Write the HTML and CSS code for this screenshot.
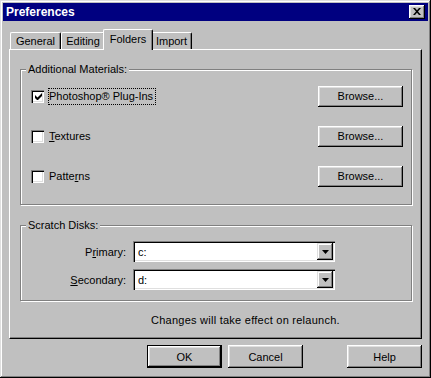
FILE: index.html
```html
<!DOCTYPE html>
<html lang="en">
<head>
    <meta charset="UTF-8">
    <title>Preferences</title>
    <link rel="stylesheet" href="styles.css">
</head>
<body>
    <div class="window">
        <div class="titlebar">
            <span class="title">Preferences</span>
            <span class="close">
                <svg width="8" height="7" viewBox="0 0 8 7"><path d="M0 0h2l2 2.2L6 0h2L5 3.5 8 7H6L4 4.8 2 7H0l3-3.5z" fill="#000"/></svg>
            </span>
        </div>

        <div class="content">
            <div class="tabs">
                <span class="tab tab-general">General</span>
                <span class="tab tab-editing">Editing</span>
                <span class="tab tab-folders active">Folders</span>
                <span class="tab tab-import">Import</span>
            </div>

            <div class="panel">
                <fieldset class="group materials">
                    <legend>Additional Materials:</legend>
                    <div class="row">
                        <span class="check">
                            <svg width="7" height="7" viewBox="0 0 7 7"><path d="M0 2v3l2 2h1l4-4V0L2.5 4.5z" fill="#000"/></svg>
                        </span>
                        <span class="check-label focused">Photoshop® Plug-Ins</span>
                        <span class="btn browse">Browse...</span>
                    </div>
                    <div class="row">
                        <span class="check"></span>
                        <span class="check-label"><u>T</u>extures</span>
                        <span class="btn browse">Browse...</span>
                    </div>
                    <div class="row">
                        <span class="check"></span>
                        <span class="check-label">Patte<u>r</u>ns</span>
                        <span class="btn browse">Browse...</span>
                    </div>
                </fieldset>

                <fieldset class="group scratch">
                    <legend>Scratch Disks:</legend>
                    <div class="disk-grid">
                        <span class="disk-label">P<u>r</u>imary:</span>
                        <div class="combo">
                            <span class="combo-value">c:</span>
                            <span class="combo-btn"><svg width="7" height="4" viewBox="0 0 7 4"><path d="M0 0h7L3.5 4z" fill="#000"/></svg></span>
                        </div>
                        <span class="disk-label"><u>S</u>econdary:</span>
                        <div class="combo">
                            <span class="combo-value">d:</span>
                            <span class="combo-btn"><svg width="7" height="4" viewBox="0 0 7 4"><path d="M0 0h7L3.5 4z" fill="#000"/></svg></span>
                        </div>
                    </div>
                </fieldset>

                <p class="note">Changes will take effect on relaunch.</p>
            </div>

            <div class="actions">
                <span class="btn default">OK</span>
                <span class="btn cancel">Cancel</span>
                <span class="btn help">Help</span>
            </div>
        </div>
    </div>
</body>
</html>
```

FILE: styles.css
```css
body {
    margin: 0;
    background-color: #c0c0c0;
    font-family: "Liberation Sans", Arial, sans-serif;
    font-size: 11px;
    color: #000;
}
.window {
    width: 431px;
    height: 378px;
    box-sizing: border-box;
    padding: 3px;
    background-color: #c0c0c0;
    box-shadow: inset -1px -1px #000, inset 1px 1px #dfdfdf, inset -2px -2px #808080, inset 2px 2px #fff;
}
.titlebar {
    height: 18px;
    background-color: #000080;
    color: #fff;
    display: flex;
    align-items: center;
    justify-content: space-between;
    padding: 0 3px 0 3px;
}
.title {
    font-weight: bold;
    font-size: 12px;
}
.close {
    width: 16px;
    height: 14px;
    box-sizing: border-box;
    background-color: #c0c0c0;
    box-shadow: inset -1px -1px #000, inset 1px 1px #fff, inset -2px -2px #808080, inset 2px 2px #dfdfdf;
    display: flex;
    align-items: center;
    justify-content: center;
}
.close svg {
    display: block;
    margin: 0 1px 1px 0;
}
.content {
    padding: 8px 6px 0;
}
/* Tabs */
.tabs {
    height: 20px;
    display: flex;
    align-items: flex-end;
    padding-left: 1px;
    position: relative;
    z-index: 1;
}
.tab {
    height: 17px;
    box-sizing: border-box;
    border-top: 1px solid #fff;
    border-left: 1px solid #fff;
    border-right: 1px solid #000;
    border-radius: 2px 2px 0 0;
    box-shadow: inset -1px 0 #808080;
    display: flex;
    align-items: center;
    justify-content: center;
    background-color: #c0c0c0;
}
.tab-general { width: 51px; }
.tab-editing { width: 44px; }
.tab-folders { width: 46px; }
.tab-import { width: 41px; }
.tab.active {
    width: 50px;
    height: 21px;
    margin: 0 -2px -1px;
    padding-bottom: 3px;
    position: relative;
    z-index: 2;
}
/* Panel */
.panel {
    height: 290px;
    box-sizing: border-box;
    border-top: 1px solid #fff;
    border-left: 1px solid #fff;
    border-right: 1px solid #000;
    border-bottom: 1px solid #000;
    box-shadow: inset -1px -1px #808080;
    padding: 0 9px 0 10px;
    display: flex;
    flex-direction: column;
}
.group {
    margin: 0;
    padding: 0;
    border: 1px solid #808080;
    box-shadow: inset 1px 1px #fff, 1px 1px #fff;
}
.group legend {
    margin-left: 5px;
    padding: 0 2px;
    line-height: 13px;
    background-color: #c0c0c0;
}
.materials {
    margin-top: 13px;
    padding-bottom: 8px;
}
.row {
    height: 40px;
    display: flex;
    align-items: center;
    padding: 0 8px 0 10px;
}
.check {
    width: 13px;
    height: 13px;
    box-sizing: border-box;
    background-color: #fff;
    box-shadow: inset 1px 1px #808080, inset 2px 2px #000, inset -1px -1px #fff, inset -2px -2px #dfdfdf;
    display: flex;
    align-items: center;
    justify-content: center;
}
.check svg {
    display: block;
    margin: 1px 0 0 1px;
}
.check-label {
    margin-left: 4px;
    padding: 1px 2px 1px 0;
    line-height: 13px;
    border: 1px solid transparent;
}
.check-label.focused {
    border: 1px dotted #000;
}
.btn {
    box-sizing: border-box;
    display: flex;
    align-items: center;
    justify-content: center;
    background-color: #c0c0c0;
    box-shadow: inset -1px -1px #000, inset 1px 1px #fff, inset -2px -2px #808080, inset 2px 2px #dfdfdf;
}
.browse {
    width: 85px;
    height: 21px;
    margin-left: auto;
}
.scratch {
    margin-top: 14px;
    padding: 9px 0 10px;
}
.disk-grid {
    display: grid;
    grid-template-columns: 105px 202px;
    grid-auto-rows: 21px;
    column-gap: 7px;
    row-gap: 7px;
    align-items: center;
}
.disk-label {
    text-align: right;
}
.combo {
    height: 21px;
    box-sizing: border-box;
    padding: 2px;
    background-color: #fff;
    box-shadow: inset 1px 1px #808080, inset 2px 2px #000, inset -1px -1px #fff, inset -2px -2px #dfdfdf;
    display: flex;
    align-items: center;
    justify-content: space-between;
}
.combo-value {
    padding-left: 3px;
}
.combo-btn {
    width: 16px;
    height: 17px;
    box-sizing: border-box;
    background-color: #c0c0c0;
    box-shadow: inset -1px -1px #000, inset 1px 1px #dfdfdf, inset -2px -2px #808080, inset 2px 2px #fff;
    display: flex;
    align-items: center;
    justify-content: center;
}
.note {
    margin: 13px 0 0 131px;
    line-height: 13px;
    letter-spacing: 0.25px;
}
/* Dialog buttons */
.actions {
    display: flex;
    justify-content: flex-end;
    margin-top: 6px;
}
.actions .btn {
    width: 75px;
    height: 23px;
}
.btn.default {
    border: 1px solid #000;
}
.btn.cancel {
    margin-left: 6px;
}
.btn.help {
    margin-left: 44px;
}
```
